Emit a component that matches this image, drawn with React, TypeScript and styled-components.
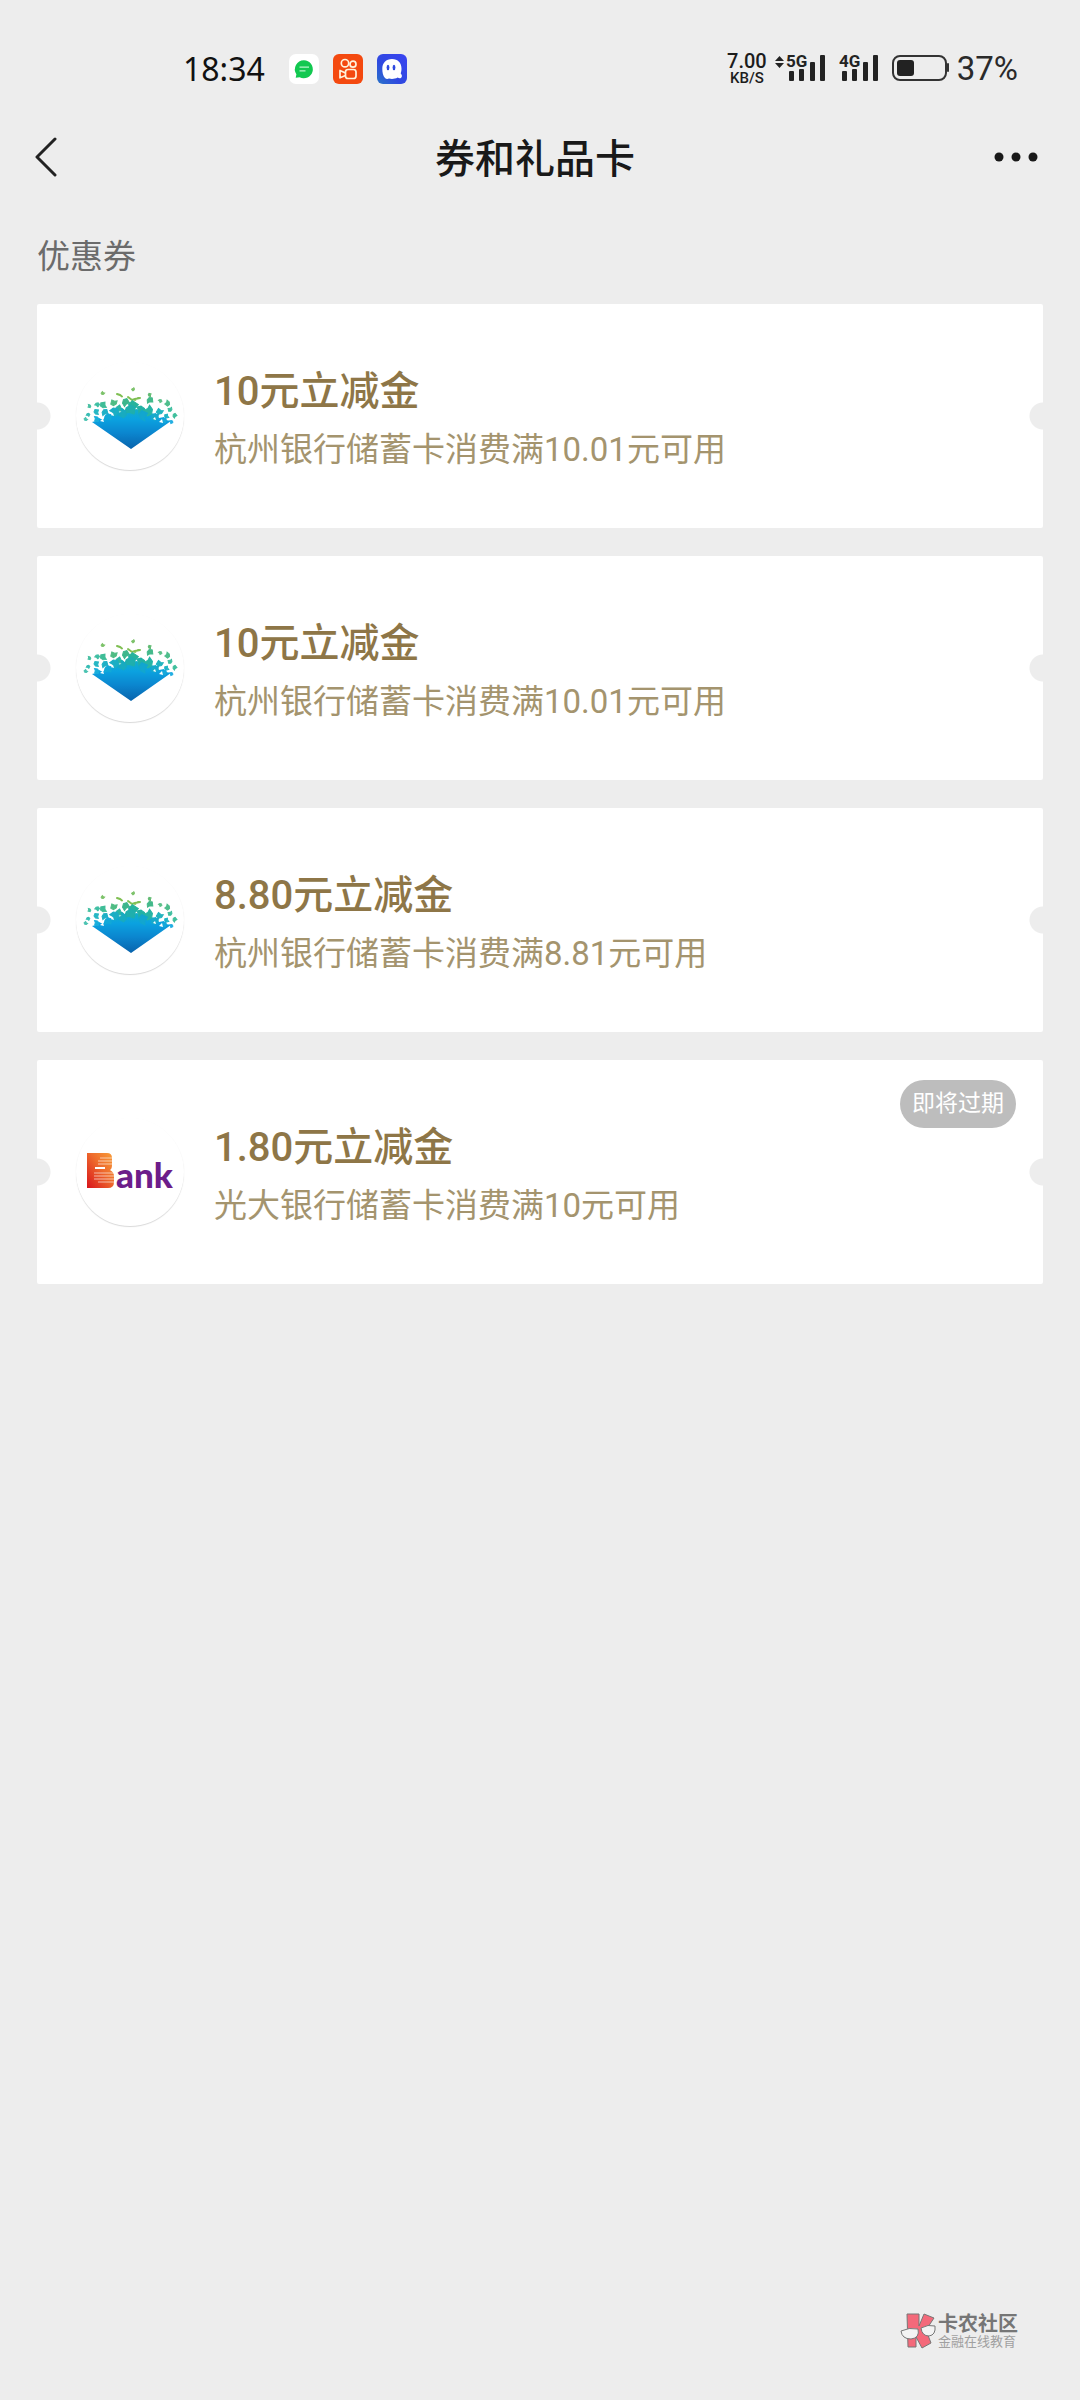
import React from "react";
import styled, { createGlobalStyle } from "styled-components";

const sans = `Roboto, "Noto Sans CJK SC", sans-serif`;

const GlobalStyle = createGlobalStyle`
  *, *::before, *::after { box-sizing: border-box; }
  body { margin: 0; background: #ededed; font-family: ${sans}; }
`;

const Page = styled.div`
  min-height: 100vh;
  display: flex;
  flex-direction: column;
  background: #ededed;
  color: #191919;
`;

const StatusBar = styled.div`
  height: 112px;
  padding: 26px 62px 0 183px;
  display: flex;
  align-items: center;
  justify-content: space-between;
`;

const StatusGroup = styled.div<{ $gap: number }>`
  display: flex;
  align-items: center;
  gap: ${(p) => p.$gap}px;
`;

const StatusText = styled.span`
  font-family: "Noto Sans", sans-serif;
  font-size: 32px;
  line-height: 40px;
  color: #111;
`;

const BatteryText = styled(StatusText)`
  font-family: Roboto, sans-serif;
  font-size: 33px;
  color: #2a2a2a;
`;

const AppIcons = styled.div`
  display: flex;
  gap: 14px;
  margin-left: 8px;
`;

const NetSpeed = styled.div`
  display: flex;
  flex-direction: column;
  align-items: center;
  font-weight: 500;
  color: #1c1c1c;
`;

const SpeedValue = styled.span`
  font-size: 20px;
  line-height: 18px;
`;

const SpeedUnit = styled.span`
  font-size: 15px;
  line-height: 16px;
`;

const NavBar = styled.header`
  height: 90px;
  padding: 0 42px 0 32px;
  display: grid;
  grid-template-columns: 48px 1fr 48px;
  align-items: center;
`;

const NavButton = styled.button<{ $end?: boolean }>`
  height: 48px;
  padding: 0;
  border: 0;
  background: none;
  display: flex;
  align-items: center;
  justify-content: ${(p) => (p.$end ? "flex-end" : "flex-start")};
`;

const NavTitle = styled.h1`
  margin: 0;
  padding-top: 6px;
  text-align: center;
  font-size: 40px;
  line-height: 48px;
  font-weight: 500;
`;

const Section = styled.main`
  padding: 31px 37px 48px;
`;

const SectionTitle = styled.h2`
  margin: 0 0 23px;
  font-size: 33px;
  line-height: 48px;
  font-weight: 400;
  color: #6b6b6b;
`;

const CouponList = styled.ul`
  margin: 0;
  padding: 0;
  list-style: none;
  display: flex;
  flex-direction: column;
  gap: 28px;
`;

const Coupon = styled.li`
  position: relative;
  min-height: 224px;
  padding: 0 39px;
  display: flex;
  align-items: center;
  gap: 30px;
  border-radius: 2px;
  background:
    radial-gradient(circle at 0 50%, #ededed 13px, transparent 14px),
    radial-gradient(circle at 100% 50%, #ededed 13px, transparent 14px),
    #fff;
`;

const LogoDisc = styled.div`
  width: 108px;
  height: 108px;
  flex: none;
  border-radius: 50%;
  box-shadow: 0 1px 1px #d9d9d9;
  background: #fff;
`;

const CouponText = styled.div`
  padding-top: 8px;
  display: flex;
  flex-direction: column;
  gap: 4px;
`;

const CouponName = styled.strong`
  font-size: 40px;
  line-height: 56px;
  font-weight: 500;
  color: #8e7647;
`;

const CouponRule = styled.span`
  font-size: 33px;
  line-height: 52px;
  color: #a4946e;
`;

const Badge = styled.span`
  position: absolute;
  top: 20px;
  right: 27px;
  padding: 0 12px;
  border-radius: 24px;
  background: #bdbdbd;
  color: #fff;
  font-size: 23px;
  line-height: 48px;
`;

const Footer = styled.footer`
  margin-top: auto;
  padding: 0 62px 51px;
  display: flex;
  justify-content: flex-end;
  align-items: center;
  gap: 2px;
`;

const Brand = styled.div`
  display: flex;
  flex-direction: column;
`;

const BrandName = styled.span`
  font-size: 20px;
  line-height: 22px;
  font-weight: 700;
  color: #767676;
`;

const BrandTag = styled.span`
  font-size: 13px;
  line-height: 14px;
  color: #a0a0a0;
`;

function MessageIcon() {
  return (
    <svg width="30" height="30" viewBox="0 0 30 30" aria-hidden="true">
      <rect width="30" height="30" rx="7" fill="#fff" />
      <path d="M15 6.2a9 9 0 1 1-4.300 17l-4 .6.700-3.600A9 9 0 0 1 15 6.200z" fill="#12c850" />
      <path d="M10.500 13.200h9.500M10.500 16.800h6" stroke="#b5f3c9" strokeWidth="1.300" />
    </svg>
  );
}

function VideoIcon() {
  return (
    <svg width="30" height="30" viewBox="0 0 30 30" aria-hidden="true">
      <rect width="30" height="30" rx="6" fill="#f4490f" />
      <g fill="none" stroke="#fff3dc" strokeWidth="1.700" strokeLinejoin="round">
        <circle cx="12" cy="9.200" r="3.700" />
        <circle cx="20" cy="10.200" r="3" />
        <rect x="12.500" y="15.500" width="10.500" height="9" rx="2.500" />
        <path d="M12.500 19l-5.500-2.500v7.300l5.500-2.300" />
      </g>
    </svg>
  );
}

function GhostIcon() {
  return (
    <svg width="30" height="30" viewBox="0 0 30 30" aria-hidden="true">
      <defs>
        <linearGradient id="ghost" x1="0" y1="1" x2="1" y2="0">
          <stop offset="0" stopColor="#2a74c8" />
          <stop offset=".4" stopColor="#2f49e0" />
          <stop offset="1" stopColor="#3a44f2" />
        </linearGradient>
      </defs>
      <rect width="30" height="30" rx="6" fill="url(#ghost)" />
      <path d="M15 5c6 0 9.500 4 9.500 9.500 0 2-.3 3.500-.8 5 .8 1 1.600 2 1 3.500-.7 1.700-2.700 1.500-4 .6C18.800 24.600 17 25 15 25c-1 0-2-.1-3-.4-1.300.6-3 .6-4-.600C6 22 5.300 18.500 5.300 14.800 5.300 9 9 5 15 5z" fill="#fff" />
      <ellipse cx="11" cy="13.500" rx="1.400" ry="2.700" fill="#2f49e0" />
      <ellipse cx="17" cy="13.500" rx="1.400" ry="2.700" fill="#2f49e0" />
    </svg>
  );
}

function Signal({ label, arrows }: { label: string; arrows?: boolean }) {
  const left = arrows ? 11 : 0;
  const width = left + 40;
  return (
    <svg width={width} height="42" viewBox={`0 -6 ${width} 42`} fill="#232323" role="img" aria-label={label}>
      {arrows && <path d="M0 7l4.500-5 4.500 5zM0 9h9l-4.500 5z" />}
      <text x={left} y="13" fontFamily="Roboto, sans-serif" fontSize="17" fontWeight="700">{label}</text>
      <rect x={left + 3} y="17" width="5" height="10" rx="1" />
      <rect x={left + 13} y="15" width="5" height="12" rx="1" />
      <rect x={left + 24} y="8" width="5" height="19" rx="1" />
      <rect x={left + 34} y="1" width="5" height="26" rx="1" />
    </svg>
  );
}

function Battery() {
  return (
    <svg width="57" height="28" viewBox="0 0 57 28" role="img" aria-label="37%">
      <rect x="1" y="1" width="53" height="24" rx="7" fill="none" stroke="#333" strokeWidth="2" />
      <rect x="5" y="5" width="17" height="16" rx="3" fill="#222" />
      <rect x="55" y="8" width="2" height="9" rx="1" fill="#333" />
    </svg>
  );
}

// Leaf-like flecks scattered above the diamond: x, y, size, colour
const flecks: [number, number, number, string][] = [
  [57, 26, 3, "#7cc26a"], [27, 30, 3, "#7cc26a"], [74, 32, 3, "#62bb74"],
  [74, 38, 6, "#43b98b"], [84, 38, 3, "#5fc08a"], [91, 40, 5, "#4fbd8c"],
  [38, 39, 6, "#4fbc84"], [28, 42, 6, "#3fbd97"], [50, 40, 7, "#3db68c"],
  [21, 42, 4, "#3fbfa3"], [13, 43, 3, "#49c0a2"], [94, 46, 4, "#3fbfa0"],
  [44, 45, 6, "#2bb5a4"], [58, 44, 10, "#26b39d"],
  [54, 48, 10, "#1fafad"], [64, 47, 8, "#22b1a4"], [72, 47, 9, "#26b4a5"],
  [84, 48, 6, "#22b4bf"], [21, 49, 5, "#27b7c4"],
  [29, 50, 6, "#1eb0c6"], [38, 49, 8, "#1baec4"], [46, 50, 8, "#18abc0"],
  [79, 53, 7, "#18aaca"], [91, 53, 4, "#1fb4c4"], [99, 53, 4, "#3fbf9c"],
  [12, 52, 3, "#38bdb4"], [20, 56, 5, "#19aedb"], [88, 57, 5, "#17a9da"],
  [10, 56, 3, "#4cc3b2"], [68, 53, 9, "#12a6cf"], [32, 55, 7, "#12a8d8"],
  [95, 59, 3, "#22aee2"],
];

function DiamondLogo({ id }: { id: string }) {
  return (
    <svg width="108" height="108" viewBox="0 -1 108 108" role="img" aria-label="杭州银行">
      <defs>
        <linearGradient id={id} x1="0" y1="0" x2="0" y2="1">
          <stop offset="0" stopColor="#14afc6" />
          <stop offset=".25" stopColor="#0ba2e0" />
          <stop offset=".6" stopColor="#0b86cf" />
          <stop offset="1" stopColor="#0863ac" />
        </linearGradient>
      </defs>
      <path
        d="M16 59l4-1 3-3 4 2 3-5 5 1 4-4 6 1 5-4 5 1 6-1 5 2 5-1 4 4 5-1 3 5 5-1 2 3 5 1L55 86z"
        fill={`url(#${id})`}
      />
      <g fill="none" stroke="#7fbf52" strokeWidth="2" strokeLinecap="round">
        <path d="M41 31l3 1 2 1.500M52 34l4 3 3-1 5-1M59 37l3-2" />
      </g>
      {flecks.map(([x, y, s, fill], i) => {
        const h = s / 2;
        return (
          <path
            key={i}
            d={`M${x - h} ${y}l${h} ${-h / 3} ${h / 2} ${-h / 1.5} ${h / 2} ${h}-${h / 3} ${h}-${h} ${h / 4}z`}
            fill={fill}
            stroke={fill}
            strokeWidth="1"
            transform={`rotate(${(i * 67) % 360} ${x} ${y})`}
          />
        );
      })}
      <g fill="#fff">
        <path d="M24 58l3-2 1 3zM83 59l3-3 1 4zM35 52l2-2 1 3zM77 56l2-2 1 3z" />
      </g>
    </svg>
  );
}

function BankLogo() {
  return (
    <svg width="108" height="108" viewBox="0 0 108 108" role="img" aria-label="Bank">
      <defs>
        <linearGradient id="flame" x1="1" y1="0" x2="0" y2="1">
          <stop offset="0" stopColor="#f9a13a" />
          <stop offset=".45" stopColor="#ee6a2c" />
          <stop offset="1" stopColor="#d8141c" />
        </linearGradient>
      </defs>
      <path d="M11 35h20q5 0 5 5v7q0 4-2 5 4 2 4 6v6q0 6-6 6H11z" fill="url(#flame)" />
      <path d="M24 40h13M22 43h15M22 46h15M18 55h20M18 58h20M18 61h20M22 64h16" stroke="#fff" strokeOpacity=".6" strokeWidth="1" />
      <path d="M19 50h10" stroke="#fff" strokeWidth="2" />
      <text x="40" y="70" fontFamily="Lato, sans-serif" fontSize="35" fontWeight="900" fill="#6c1d8a">ank</text>
    </svg>
  );
}

function BrandMark() {
  return (
    <svg width="36" height="36" viewBox="0 0 36 36" aria-hidden="true">
      <g fill="#f4697a" stroke="#777" strokeWidth="1">
        <path d="M7 1h12v12l5-12 10 4-8 12 5 13-9 5-6-11v10H8z" />
      </g>
      <g fill="#f3f3f3" stroke="#777" strokeWidth="1">
        <path d="M1 18q8-4 17-2 2 9-7 10Q2 26 1 18z" />
        <path d="M21 15q7-4 14-2 1 9-6 10-7 0-8-8z" />
      </g>
    </svg>
  );
}

const coupons = [
  { name: "10元立减金", rule: "杭州银行储蓄卡消费满10.01元可用", bank: "hz" },
  { name: "10元立减金", rule: "杭州银行储蓄卡消费满10.01元可用", bank: "hz" },
  { name: "8.80元立减金", rule: "杭州银行储蓄卡消费满8.81元可用", bank: "hz" },
  { name: "1.80元立减金", rule: "光大银行储蓄卡消费满10元可用", bank: "gd", badge: "即将过期" },
];

export default function App() {
  return (
    <Page lang="zh-CN">
      <GlobalStyle />
      <StatusBar>
        <StatusGroup $gap={16}>
          <StatusText>18:34</StatusText>
          <AppIcons>
            <MessageIcon />
            <VideoIcon />
            <GhostIcon />
          </AppIcons>
        </StatusGroup>
        <StatusGroup $gap={8}>
          <NetSpeed>
            <SpeedValue>7.00</SpeedValue>
            <SpeedUnit>KB/S</SpeedUnit>
          </NetSpeed>
          <StatusGroup $gap={13}>
            <Signal label="5G" arrows />
            <Signal label="4G" />
            <Battery />
          </StatusGroup>
          <BatteryText>37%</BatteryText>
        </StatusGroup>
      </StatusBar>
      <NavBar>
        <NavButton aria-label="返回">
          <svg width="28" height="40" viewBox="0 0 28 40" fill="none" stroke="#222" strokeWidth="3" strokeLinecap="round" strokeLinejoin="round">
            <path d="M23 2L5 20l18 18" />
          </svg>
        </NavButton>
        <NavTitle>券和礼品卡</NavTitle>
        <NavButton $end aria-label="更多">
          <svg width="44" height="12" viewBox="0 0 44 12" fill="#191919">
            <circle cx="5" cy="6" r="4.500" />
            <circle cx="22" cy="6" r="4.500" />
            <circle cx="39" cy="6" r="4.500" />
          </svg>
        </NavButton>
      </NavBar>
      <Section>
        <SectionTitle>优惠券</SectionTitle>
        <CouponList>
          {coupons.map((c, i) => (
            <Coupon key={i}>
              <LogoDisc>{c.bank === "hz" ? <DiamondLogo id={`diamond${i}`} /> : <BankLogo />}</LogoDisc>
              <CouponText>
                <CouponName>{c.name}</CouponName>
                <CouponRule>{c.rule}</CouponRule>
              </CouponText>
              {c.badge && <Badge>{c.badge}</Badge>}
            </Coupon>
          ))}
        </CouponList>
      </Section>
      <Footer>
        <BrandMark />
        <Brand>
          <BrandName>卡农社区</BrandName>
          <BrandTag>金融在线教育</BrandTag>
        </Brand>
      </Footer>
    </Page>
  );
}
